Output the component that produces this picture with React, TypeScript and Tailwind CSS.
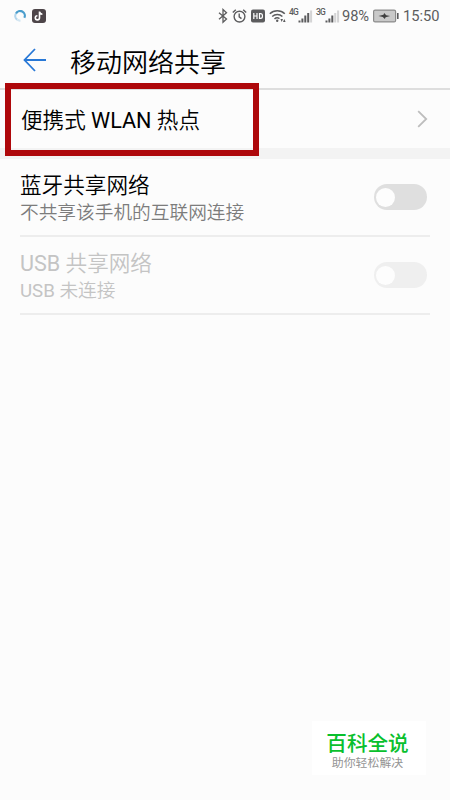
import React from "react";
import clsx from "clsx";

const FONT = "font-['Roboto','Noto_Sans_CJK_SC',sans-serif]";

function StatusBar() {
  return (
    <div className="flex h-8 shrink-0 items-center pl-3.5 pr-[9px] text-[#5c5c5e]">
      <svg width="12" height="12" viewBox="0 0 12 12" fill="none" strokeWidth="2.2">
        <path d="M3.2 9.7A4.6 4.6 0 0 1 2 3.5" stroke="#b4d6ec" />
        <path d="M2 3.5A4.6 4.6 0 0 1 10.3 7.8" stroke="#4a9dcc" />
        <path d="M3.2 9.7A4.6 4.6 0 0 0 6.5 10.5" stroke="#d3e6f2" />
      </svg>
      <svg className="ml-[6px]" width="14" height="14" viewBox="0 0 14 14" fill="none">
        <rect width="14" height="14" rx="3" fill="#4d4549" />
        <path d="M7.5 2.5v6.3a2.1 2.1 0 1 1-2.1-2.1M7.5 2.7c.2 1.6 1.2 2.5 2.9 2.6" stroke="#fff" strokeWidth="1.6" />
      </svg>

      <div className="ml-auto flex items-center">
        <BluetoothIcon />
        <AlarmIcon />
        <svg className="ml-1" width="14" height="14" viewBox="0 0 14 14">
          <rect y="0.5" width="14" height="13" rx="2" fill="currentColor" />
          <path d="M2.8 4v6M6 4v6M2.8 7H6M8.5 4.6v4.8h1a1.9 1.9 0 0 0 1.9-1.9v-1a1.9 1.9 0 0 0-1.9-1.9z" fill="none" stroke="#fff" strokeWidth="1.2" />
        </svg>
        <WifiIcon />
        <Signal label="4G" bars={4} />
        <Signal label="3G" bars={3} />
        <span className="ml-[2px] w-[28px] whitespace-nowrap text-[14.7px] leading-8 tracking-[-0.1px]">98%</span>
        <svg className="ml-[3px]" width="26" height="14" viewBox="0 0 26 14">
          <rect x="0.6" y="1.1" width="22" height="11.8" rx="1.5" fill="#c9c9c9" stroke="#8b8b8b" strokeWidth="1.2" />
          <path d="M24 4h1.6v6H24z" fill="currentColor" />
          <path d="M5.5 7l5-1.2L11.2 4l2 2.2 4 .8-4.6 1.3L11.8 10l-2-2.1z" fill="#3f3f3f" />
        </svg>
        <span className="ml-[4px] w-[38px] whitespace-nowrap text-[14.7px] leading-8">15:50</span>
      </div>
    </div>
  );
}

function BluetoothIcon() {
  return (
    <svg width="10" height="16" viewBox="0 0 10 16" fill="none" stroke="currentColor" strokeWidth="1.3">
      <path d="M1 4.7l7.5 6.4L5 14.2V1.6l3.5 3.2L1 11.2" />
    </svg>
  );
}

function AlarmIcon() {
  return (
    <svg className="ml-1" width="15" height="16" viewBox="0 0 15 16" fill="none" stroke="currentColor" strokeWidth="1.4">
      <circle cx="7.5" cy="8.6" r="5.4" />
      <path d="M7.2 5.6v3.2l2.3 1.8M0.8 4.6l3-2.9M14.2 4.6l-3-2.9" />
    </svg>
  );
}

function WifiIcon() {
  return (
    <svg className="ml-1" width="17" height="16" viewBox="0 0 17 16" fill="none" stroke="currentColor" strokeWidth="1.5">
      <path d="M0.8 5.8a10.8 10.8 0 0 1 15 0M3.2 8.5a7.4 7.4 0 0 1 10.2 0M5.5 11a4 4 0 0 1 5-.4" />
      <circle cx="8.2" cy="12.8" r="1.2" fill="currentColor" stroke="none" />
      <path d="M11.4 11l1.3 2.9 1.3-2.9zM14 14l1.3-3 1.3 3z" fill="currentColor" stroke="none" />
    </svg>
  );
}

function Signal({ label, bars }: { label: string; bars: number }) {
  return (
    <div className="ml-[3px] flex h-4 w-6 items-start">
      <span className="w-[9px] whitespace-nowrap text-[8.5px] font-medium leading-[9px] tracking-[-0.8px]">{label}</span>
      <svg width="15" height="16" viewBox="0 0 15 16" fill="currentColor">
        {[2, 4, 7, 9.5, 12].map((h, i) => (
          <rect key={h} x={0.5 + i * 2.9} y={14.5 - h} width="2" height={h} opacity={i < bars ? 1 : 0.25} />
        ))}
      </svg>
    </div>
  );
}

function Toggle({ disabled }: { disabled?: boolean }) {
  return (
    <button
      type="button"
      role="switch"
      aria-checked={false}
      disabled={disabled}
      className={clsx(
        "mr-[3px] flex h-[26px] w-[53px] shrink-0 items-center rounded-full pl-[2px]",
        disabled ? "bg-[#efefef]" : "bg-[#dfdfdf]"
      )}
    >
      <span className="size-[19px] rounded-full bg-[#fdfdfd]" />
    </button>
  );
}

type RowProps = {
  title: React.ReactNode;
  summary: React.ReactNode;
  disabled?: boolean;
};

function SettingRow({ title, summary, disabled }: RowProps) {
  return (
    <div className="mx-5 flex h-[78px] items-center justify-between border-b-2 border-[#ededed]">
      <div className={clsx("pt-1", disabled && "text-[#c4c4c4]")}>
        <div className="text-[21.6px] font-[350] leading-[28px]">{title}</div>
        <div className={clsx("text-[18.7px] font-[350] leading-[26px]", !disabled && "text-[#7c7c7c]")}>{summary}</div>
      </div>
      <Toggle disabled={disabled} />
    </div>
  );
}

// Latin words keep the regular weight next to the lighter Chinese text
function Latin({ children }: { children: React.ReactNode }) {
  return <span className="font-normal">{children}</span>;
}

export default function App() {
  return (
    <main className={clsx("relative flex h-[800px] w-[450px] flex-col overflow-hidden bg-[#fcfcfc] text-black", FONT)}>
      <StatusBar />

      <header className="flex h-[58px] shrink-0 items-center border-b-2 border-[#dedede] pl-[23px]">
        <svg width="24" height="24" viewBox="0 0 24 24" fill="none" stroke="#2878d6" strokeWidth="1.8">
          <path d="M23 12H1.5M12 1L1.5 12 12 23" />
        </svg>
        <h1 className="ml-[23px] pt-[5px] text-[26px] font-[350] leading-9">移动网络共享</h1>
      </header>

      <div className="flex h-[58px] shrink-0 items-center justify-between pl-[21px] pr-[22px]">
        <span className="pt-[3px] text-[21.6px] font-[350] leading-8">
          便携式 <Latin>WLAN</Latin> 热点
        </span>
        <svg width="11" height="18" viewBox="0 0 11 18" fill="none" stroke="#bdbdbd" strokeWidth="1.8">
          <path d="M1.2 1.2L9.2 9l-8 7.8" />
        </svg>
      </div>
      <div className="h-[11px] shrink-0 bg-[#f3f3f3]" />

      <SettingRow title="蓝牙共享网络" summary="不共享该手机的互联网连接" />
      <SettingRow title={<><Latin>USB</Latin> 共享网络</>} summary={<><Latin>USB</Latin> 未连接</>} disabled />

      <footer className="mb-[25px] ml-[312px] mt-auto flex h-[54px] w-[114px] flex-col items-center justify-center bg-white pr-[3px] pt-[7px]">
        <span className="text-[20.6px] font-medium leading-[24px] text-[#09c02d]">百科全说</span>
        <span className="text-[11.9px] leading-[15px] text-[#949494]">助你轻松解决</span>
      </footer>

      {/* highlight frame around the hotspot entry */}
      <div className="pointer-events-none absolute left-[5px] top-[83px] h-[73px] w-[254px] border-[6px] border-[#ae080b]" />
    </main>
  );
}
